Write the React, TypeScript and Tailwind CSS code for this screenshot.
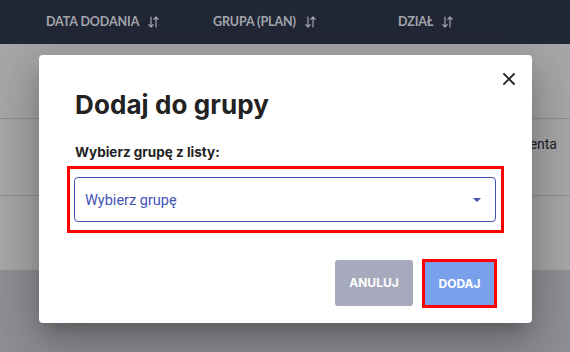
import React from 'react';

const SortIcon = () => (
  <svg width="11" height="12" viewBox="0 0 11 12" fill="none" stroke="currentColor" strokeWidth="1.2" strokeLinecap="round" strokeLinejoin="round">
    <path d="M3 1v10M0.8 8.6L3 11l2.2-2.4" />
    <path d="M8 11V1M5.8 3.4L8 1l2.2 2.4" />
  </svg>
);

const columns = ['DATA DODANIA', 'GRUPA (PLAN)', 'DZIAŁ'];

const App: React.FC = () => {
  return (
    <div className="relative w-[570px] h-[352px] overflow-hidden bg-[#dadce3]" style={{ fontFamily: 'Lato, "Open Sans", sans-serif' }}>
      {/* table header */}
      <div className="relative z-20 h-[44px] bg-[#222736] flex items-center pl-[46px] text-[12.5px] font-bold text-[#a4a6ad] tracking-[-0.1px]">
        {columns.map((c, i) => (
          <div key={c} className={`flex items-center gap-[9px] ${i === 0 ? 'w-[167px]' : i === 1 ? 'w-[185px]' : ''}`}>
            <span>{c}</span>
            <SortIcon />
          </div>
        ))}
      </div>

      {/* table rows behind the backdrop */}
      <div className="bg-white" style={{ fontFamily: 'Roboto, sans-serif' }}>
        <div className="h-[75px] border-b border-[#dcdcdc]" />
        <div className="h-[77px] border-b border-[#dcdcdc] flex items-start justify-end pt-[15px] pr-[13px] text-[14px] leading-[20px] text-[#2e3140]">
          <span>Nazwa klienta</span>
        </div>
        <div className="h-[74px]" />
      </div>

      {/* backdrop */}
      <div className="absolute left-0 right-0 top-[44px] bottom-0 bg-black/35" />

      {/* modal */}
      <div className="absolute z-30 left-[39px] top-[55px] w-[493px] h-[268px] bg-white rounded-[4px] shadow-[0_11px_15px_-7px_rgba(0,0,0,0.2),0_24px_38px_3px_rgba(0,0,0,0.14),0_9px_46px_8px_rgba(0,0,0,0.12)] flex flex-col px-[28px]">
        <button className="absolute right-[17px] top-[18px] w-[12px] h-[12px] text-[#222]">
          <svg width="12" height="12" viewBox="0 0 12 12" stroke="currentColor" strokeWidth="1.8" strokeLinecap="square">
            <path d="M1 1l10 10M11 1L1 11" />
          </svg>
        </button>

        <h1 className="mt-[34px] ml-[8px] text-[26px] leading-[32px] font-bold text-[#222] tracking-[0.1px]" style={{ fontFamily: 'Inter, Lato, sans-serif' }}>Dodaj do grupy</h1>
        <div className="mt-[22px] ml-[8px] text-[13.5px] leading-[18px] font-bold text-[#222]" style={{ fontFamily: 'Inter, Lato, sans-serif' }}>Wybierz grupę z listy:</div>

        <div className="mt-[5px] border-[3px] border-[#ff0000] pl-[4px] pr-[5px] pt-[8px] pb-[8px]">
          <div className="h-[45px] rounded-[4px] border border-[#3f51b5] flex items-center justify-between pl-[10px] pr-[14px] text-[14.5px] text-[#3f51b5]" style={{ fontFamily: 'Roboto, sans-serif' }}>
            <span className="mt-[2px]">Wybierz grupę</span>
            <svg width="8" height="4" viewBox="0 0 8 4">
              <path d="M0 0h8L4 4z" fill="#3f51b5" />
            </svg>
          </div>
        </div>

        <div className="mt-[26px] flex justify-end gap-[9px] pr-[7px] text-[12px] font-bold text-white" style={{ fontFamily: 'Inter, Lato, sans-serif' }}>
          <button className="w-[78px] h-[46px] mt-[1px] rounded-[3px] bg-[#a7a9bc]">ANULUJ</button>
          <button className="w-[75px] h-[49px] border-[3px] border-[#ff0000] bg-[#79a1eb]">DODAJ</button>
        </div>
      </div>
    </div>
  );
};

export default App;
